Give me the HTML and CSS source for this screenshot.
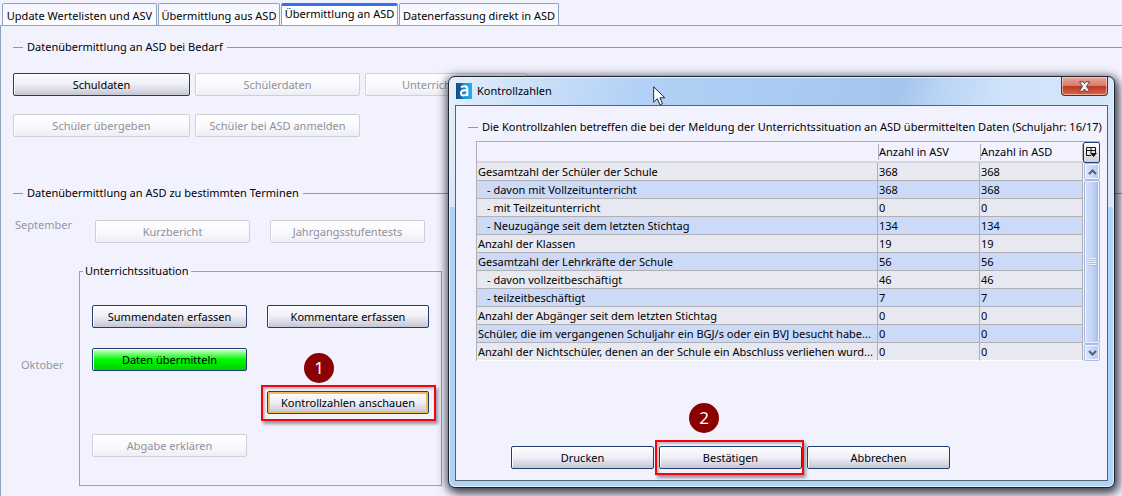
FILE: index.html
```html
<!DOCTYPE html>
<html lang="de">
<head>
<meta charset="utf-8">
<title>Übermittlung an ASD</title>
<link rel="stylesheet" href="styles.css">
</head>
<body>
<main class="app">
  <nav class="tabs" role="tablist">
    <button class="tab tab-1" role="tab">Update Wertelisten und ASV</button>
    <button class="tab tab-2" role="tab">Übermittlung aus ASD</button>
    <button class="tab tab-3 active" role="tab" aria-selected="true">Übermittlung an ASD</button>
    <button class="tab tab-4" role="tab">Datenerfassung direkt in ASD</button>
  </nav>
  <div class="panel">
    <h2 class="section">Datenübermittlung an ASD bei Bedarf</h2>
    <div class="demand">
      <button class="btn">Schuldaten</button>
      <button class="btn" disabled>Schülerdaten</button>
      <button class="btn" disabled>Unterrichtsdaten</button>
      <button class="btn" disabled>Schüler übergeben</button>
      <button class="btn" disabled>Schüler bei ASD anmelden</button>
    </div>
    <h2 class="section">Datenübermittlung an ASD zu bestimmten Terminen</h2>
    <div class="september">
      <span class="month">September</span>
      <button class="btn" disabled>Kurzbericht</button>
      <button class="btn" disabled>Jahrgangsstufentests</button>
    </div>
    <div class="october">
      <span class="month month-oct">Oktober</span>
      <fieldset class="group">
        <legend>Unterrichtssituation</legend>
        <div class="group-grid">
          <button class="btn">Summendaten erfassen</button>
          <button class="btn">Kommentare erfassen</button>
          <button class="btn go">Daten übermitteln</button>
          <div class="marked mark-one">
            <button class="btn focused">Kontrollzahlen anschauen</button>
            <span class="frame"></span>
            <span class="badge">1</span>
          </div>
          <button class="btn last" disabled>Abgabe erklären</button>
        </div>
      </fieldset>
    </div>
  </div>
</main>

<section class="dialog" role="dialog" aria-labelledby="dlg-title">
  <header class="titlebar">
    <svg class="logo" width="16" height="16" viewBox="0 0 16 16" aria-hidden="true">
      <defs><linearGradient id="lg"><stop offset="0" stop-color="#124a85"/><stop offset=".3" stop-color="#1c62a3"/><stop offset=".5" stop-color="#1b93d2"/><stop offset="1" stop-color="#2bb0e8"/></linearGradient></defs>
      <rect width="16" height="16" fill="url(#lg)"/>
      <path d="M5 4.2Q7 3 9 3.2Q11.3 3.4 11.3 6V13M11.3 7.2H8.500Q5 7.3 5 10Q5 12.500 7.500 12.500Q10 12.4 11.3 10.500" fill="none" stroke="#fff" stroke-width="2"/>
    </svg>
    <span class="title" id="dlg-title">Kontrollzahlen</span>
    <button class="close" aria-label="Schließen">
      <svg width="13" height="11" viewBox="0 0 13 11"><path d="M1.500 .7H5L6.500 2.600L8 .7H11.500L8.500 5.4L11.700 10.3H8.200L6.500 8L4.800 10.3H1.3L4.500 5.4Z" fill="#f4f4f6" stroke="#5b4650" stroke-width="1"/></svg>
    </button>
  </header>
  <div class="content">
    <h2 class="section">Die Kontrollzahlen betreffen die bei der Meldung der Unterrichtssituation an ASD übermittelten Daten (Schuljahr: 16/17)</h2>
    <div class="table-box">
      <table class="figures">
        <colgroup><col><col class="asv"><col class="asd"></colgroup>
        <thead><tr><th></th><th><span>Anzahl in ASV</span></th><th><span>Anzahl in ASD</span></th></tr></thead>
        <tbody>
          <tr><td>Gesamtzahl der Schüler der Schule</td><td>368</td><td>368</td></tr>
          <tr><td class="sub">- davon mit Vollzeitunterricht</td><td>368</td><td>368</td></tr>
          <tr><td class="sub">- mit Teilzeitunterricht</td><td>0</td><td>0</td></tr>
          <tr><td class="sub">- Neuzugänge seit dem letzten Stichtag</td><td>134</td><td>134</td></tr>
          <tr><td>Anzahl der Klassen</td><td>19</td><td>19</td></tr>
          <tr><td>Gesamtzahl der Lehrkräfte der Schule</td><td>56</td><td>56</td></tr>
          <tr><td class="sub">- davon vollzeitbeschäftigt</td><td>46</td><td>46</td></tr>
          <tr><td class="sub">- teilzeitbeschäftigt</td><td>7</td><td>7</td></tr>
          <tr><td>Anzahl der Abgänger seit dem letzten Stichtag</td><td>0</td><td>0</td></tr>
          <tr><td>Schüler, die im vergangenen Schuljahr ein BGJ/s oder ein BVJ besucht habe...</td><td>0</td><td>0</td></tr>
          <tr><td>Anzahl der Nichtschüler, denen an der Schule ein Abschluss verliehen wurd...</td><td>0</td><td>0</td></tr>
        </tbody>
      </table>
      <div class="side">
        <button class="columns" aria-label="Spalten">
          <svg width="11" height="11" viewBox="0 0 11 11"><path d="M.5 .5H9.500V6M.5 .5V8.500H5M.5 3.500H9.500M5 .5V6" fill="none" stroke="#111"/><path d="M4 6H11L7.500 10Z" fill="#111"/></svg>
        </button>
        <button class="arrow" aria-label="Nach oben">
          <svg width="9" height="6" viewBox="0 0 9 6"><path d="M1 5L4.500 1.500L8 5" fill="none" stroke="#4d6185" stroke-width="2"/></svg>
        </button>
        <div class="thumb"><span class="grip"></span></div>
        <button class="arrow" aria-label="Nach unten">
          <svg width="9" height="6" viewBox="0 0 9 6"><path d="M1 1L4.500 4.500L8 1" fill="none" stroke="#4d6185" stroke-width="2"/></svg>
        </button>
      </div>
    </div>
    <div class="actions">
      <button class="btn">Drucken</button>
      <div class="marked mark-two">
        <button class="btn">Bestätigen</button>
        <span class="frame"></span>
        <span class="badge">2</span>
      </div>
      <button class="btn">Abbrechen</button>
    </div>
  </div>
</section>

<svg class="cursor" width="13" height="20" viewBox="0 0 13 20" aria-hidden="true"><path d="M.7 .8V16.200L4.300 12.700L7 18.800L9.500 17.700L6.900 11.800H11.800Z" fill="#fff" stroke="#222b3c"/></svg>
</body>
</html>
```
FILE: styles.css
```css
* { box-sizing: border-box; }
body {
  margin: 0;
  min-height: 100vh;
  display: flex;
  overflow: hidden;
  background: #f2f2ff;
  color: #000;
  font: 11px/16px "Noto Sans", "Open Sans", sans-serif;
}
button { font: inherit; color: inherit; padding: 0; }
.app { flex: 1; display: flex; flex-direction: column; }

/* Tabs */
.tabs { display: flex; gap: 1px; padding: 3px 0 0 2px; border-bottom: 1px solid #8fa3bf; }
.tab {
  height: 22px;
  padding: 3px 0 0;
  border: 1px solid #8fa3bf;
  border-bottom: 0;
  border-radius: 2px 2px 0 0;
  background: linear-gradient(#f5f5ff, #fdfdff);
  white-space: nowrap;
}
.tab-1 { width: 155px; }
.tab-2 { width: 122px; }
.tab-3 { width: 117px; }
.tab-4 { width: 160px; }
.tab.active { border-top: 3px solid #3673e8; padding: 0 0 3px; background: #fff; }

.panel { flex: 1; border-left: 1px solid #8fa3bf; padding: 13px 0 0 12px; }

.section {
  display: flex;
  align-items: center;
  gap: 4px;
  margin: 0;
  font-size: 11px;
  line-height: 16px;
  font-weight: 400;
  white-space: nowrap;
}
.section::before, .section::after { content: ""; height: 1px; background: #96969e; }
.section::before { flex: none; width: 10px; }
.section::after { flex: 1; }

/* Buttons */
.btn {
  width: 100%;
  height: 23px;
  border: 1px solid #1f3f70;
  border-radius: 2px;
  background: linear-gradient(#fdfdff, #eeeef7 50%, #c6c6d4);
  box-shadow: inset 1px 1px #fff;
  white-space: nowrap;
}
.btn:disabled { color: #919196; border-color: #cfcfd8; background: linear-gradient(#fff, #fafafe 50%, #ededf5); }
.btn.go { background: linear-gradient(#d8ffd8, #00fa00 50%, #00d000); }
.btn.focused { box-shadow: inset 0 0 0 2px #f3bd55; }

.demand {
  display: grid;
  grid-template-columns: 177px 165px 162px;
  column-gap: 5px;
  row-gap: 18px;
  padding: 18px 0 48px;
}
.month { color: #96969c; }
.september {
  display: grid;
  grid-template-columns: 62px 155px 155px;
  column-gap: 20px;
  padding: 19px 0 20px;
}
.september .month { padding-left: 2px; margin-top: -3px; }
.october { display: grid; grid-template-columns: 66px 363px; }
.month-oct { padding: 94px 0 0 8px; }

.group { margin: 0; padding: 26px 12px 28px; border: 1px solid #a0a0a8; min-width: 0; }
.group legend { margin-left: -9px; padding: 0 2px; }
.group-grid { display: grid; grid-template-columns: 155px 162px; column-gap: 20px; row-gap: 20px; }
.mark-one { grid-row: 3; grid-column: 2; }
.go { grid-row: 2; grid-column: 1; }
.last { grid-row: 4; }

/* Step markers laid over buttons */
.marked { position: relative; display: flex; }
.frame {
  position: absolute;
  inset: -6px -7px -7px -6px;
  border: 2px solid #f50505;
  box-shadow: 2px 3px 3px rgba(60, 60, 80, .5), inset 2px 2px 2px rgba(60, 60, 80, .3);
  pointer-events: none;
}
.mark-two .frame { inset: -6px -2px -6px -4px; }
.badge {
  position: absolute;
  left: 37px;
  top: -38px;
  width: 30px;
  height: 30px;
  border-radius: 50%;
  background: #8b0000;
  color: #fff;
  font: 17px/30px "Noto Sans", sans-serif;
  text-align: center;
}
.mark-two .badge { left: 30px; top: -43px; }

/* Dialog window */
.dialog {
  position: absolute;
  left: 448px;
  right: 7px;
  top: 76px;
  padding: 0 6px 6px;
  border: 1px solid #20242c;
  border-radius: 7px;
  background:
    linear-gradient(105deg, #e4f0fc 0, #cfe2f8 10%, #b2d1f6 28%, #abccf3 44%, #a5c5ec 65%, #b7d3f4 70%, #d0e3fa 80%, #d5e7fb) 0 0 / 100% 130px no-repeat,
    #b2d3f8;
  box-shadow: inset 0 0 0 1px #e3f2ff, 0 2px 10px 2px rgba(20, 20, 30, .65), 4px 5px 10px rgba(20, 20, 30, .45);
}
.titlebar { display: flex; align-items: center; height: 28px; padding-left: 1px; }
.title { flex: 1; margin-left: 5px; }
.close {
  align-self: flex-start;
  display: grid;
  place-items: center;
  width: 47px;
  height: 19px;
  border: 1px solid #5a2b35;
  border-top: 0;
  border-radius: 0 0 4px 4px;
  background: linear-gradient(#e9aa9c, #d67b69 48%, #bd3922 52%, #d7674a);
  box-shadow: inset 0 0 0 1px rgba(255, 220, 210, .6);
}
.content { border: 1px solid #566376; background: #f2f2ff; padding: 13px 7px 11px 12px; }
.table-box { display: flex; margin: 6px 0 0 8px; border-top: 1px solid #b0b0b4; }
.figures { flex: 1; min-width: 0; table-layout: fixed; border-collapse: separate; border-spacing: 0; border-left: 1px solid #b0b0b4; }
.asv { width: 102px; }
.asd { width: 103px; }
.figures th {
  height: 21px;
  padding: 2px 0 1px;
  border-bottom: 2px solid #d5d5de;
  font-weight: 400;
  text-align: left;
}
.figures th span { display: block; border-left: 1px solid #b0b0b4; }
.figures th:last-child span { border-right: 1px solid #b0b0b4; }
.figures td {
  height: 18px;
  padding: 0 1px;
  border-right: 1px solid #b0b0b4;
  border-bottom: 1px solid #b0b0b4;
  background: #e8e8f0;
  white-space: nowrap;
  line-height: 17px;
}
.figures tr:nth-child(even) td { background: #ccdaf7; }
.figures tr:last-child td { border-bottom-color: #fff; }
.figures .sub { padding-left: 10px; }
.side { width: 17px; display: flex; flex-direction: column; }
.columns {
  display: grid;
  place-items: center;
  height: 21px;
  border: 1px solid #1f3f70;
  border-radius: 2px;
  background: linear-gradient(#fff, #d0d0dc);
}
.arrow {
  display: grid;
  place-items: center;
  height: 17px;
  margin-left: 1px;
  border: 1px solid #aabde3;
  border-radius: 2px;
  background: linear-gradient(90deg, #dce7ff, #b8c8ed);
  box-shadow: inset 0 0 0 1px #f4f7ff;
}
.thumb {
  flex: 1;
  display: grid;
  place-items: center;
  margin-left: 1px;
  border: 1px solid #a4b8df;
  border-radius: 2px;
  background: linear-gradient(90deg, #d4e0fc, #c0d0f5 60%, #a5b7e0);
  box-shadow: inset 0 0 0 1px #edf2ff;
}
.grip { width: 7px; height: 8px; background: repeating-linear-gradient(#f4f7ff 0 1px, #a6b9e3 1px 2px); }
.actions { display: grid; grid-template-columns: repeat(3, 143px); gap: 5px; margin: 85px 0 0 43px; }

.cursor { position: absolute; left: 653px; top: 86px; }
```
